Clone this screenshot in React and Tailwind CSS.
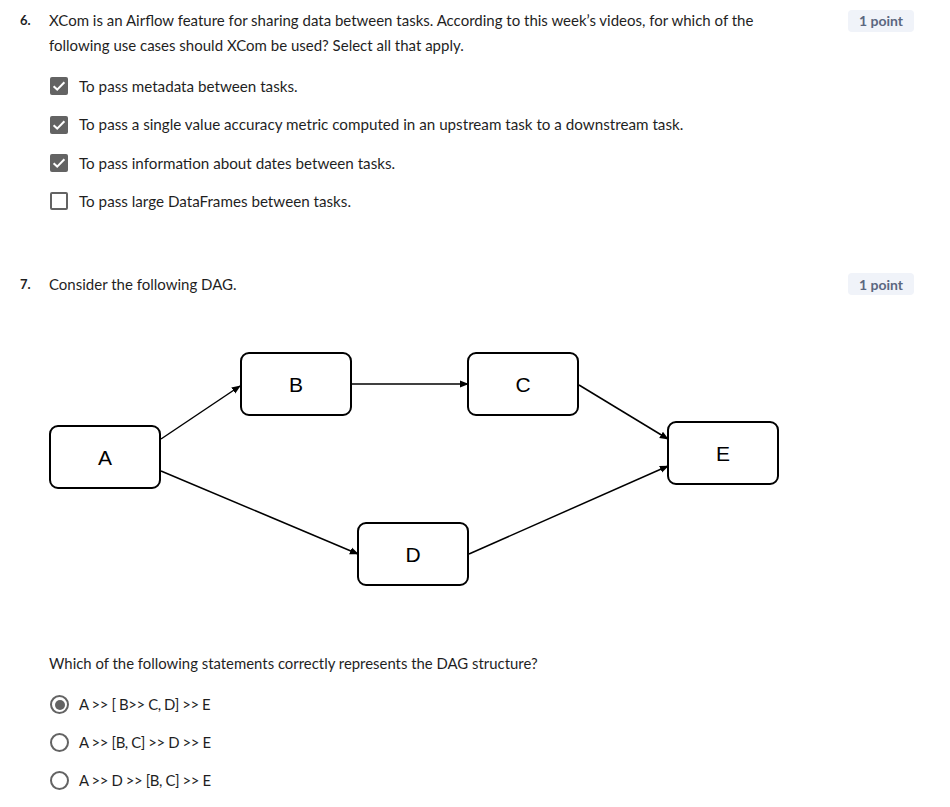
import React from "react";

const font = { fontFamily: "Lato, 'Noto Sans', sans-serif" };

function Badge() {
  return (
    <span className="shrink-0 rounded-[4px] bg-[#f0f3f9] px-[11px] h-[22px] flex items-center text-[14px] font-bold text-[#5b6780]">
      1 point
    </span>
  );
}

function Checkbox({ checked }) {
  return checked ? (
    <span className="w-[18px] h-[18px] rounded-[2px] bg-[#636363] flex items-center justify-center shrink-0">
      <svg width="16" height="16" viewBox="0 0 16 16">
        <path d="M2.6 8.2 L6.2 11.6 L13.4 4.2" fill="none" stroke="white" strokeWidth="2" />
      </svg>
    </span>
  ) : (
    <span className="w-[18px] h-[18px] rounded-[2px] border-2 border-[#636363] bg-white shrink-0" />
  );
}

function Radio({ checked }) {
  return (
    <span className="w-[19px] h-[19px] rounded-full border-2 border-[#636363] flex items-center justify-center shrink-0">
      {checked && <span className="w-[10px] h-[10px] rounded-full bg-[#636363]" />}
    </span>
  );
}

function Node({ x, y, label }) {
  return (
    <g>
      <rect x={x} y={y} width="110" height="62" rx="8" fill="white" stroke="black" strokeWidth="2" />
      <text
        x={x + 55}
        y={y + 39}
        textAnchor="middle"
        fontFamily="'Liberation Sans', Arial, sans-serif"
        fontSize="21"
        fill="black"
      >
        {label}
      </text>
    </g>
  );
}

function Edge({ x1, y1, x2, y2 }) {
  return <line x1={x1} y1={y1} x2={x2} y2={y2} stroke="black" strokeWidth="1.5" markerEnd="url(#arrow)" />;
}

function Dag() {
  return (
    <svg width="760" height="262" viewBox="40 340 760 262" className="block">
      <defs>
        <marker id="arrow" viewBox="0 0 10 10" refX="9" refY="5" markerWidth="6" markerHeight="6" orient="auto">
          <path d="M0 1 L10 5 L0 9 z" fill="black" />
        </marker>
      </defs>
      <Edge x1={161} y1={440} x2={240} y2={387} />
      <Edge x1={352} y1={385} x2={468} y2={385} />
      <Edge x1={579} y1={386} x2={668} y2={440} />
      <Edge x1={161} y1={472} x2={358} y2={555} />
      <Edge x1={469} y1={555} x2={668} y2={467} />
      <Node x={50} y={427} label="A" />
      <Node x={241} y={354} label="B" />
      <Node x={468} y={354} label="C" />
      <Node x={358} y={524} label="D" />
      <Node x={668} y={423} label="E" />
    </svg>
  );
}

export default function App() {
  const q6 = [
    { text: "To pass metadata between tasks.", checked: true },
    { text: "To pass a single value accuracy metric computed in an upstream task to a downstream task.", checked: true },
    { text: "To pass information about dates between tasks.", checked: true },
    { text: "To pass large DataFrames between tasks.", checked: false },
  ];
  const q7 = [
    { text: "A >> [ B>> C, D] >> E", checked: true },
    { text: "A >> [B, C] >> D >> E", checked: false },
    { text: "A >> D >> [B, C] >> E", checked: false },
  ];

  return (
    <div className="bg-white w-[950px] min-h-[807px] text-[#1f1f1f] pl-[20px] pr-[36px] pt-[8px]" style={font}>
      {/* Question 6 */}
      <div className="flex">
        <span className="w-[29px] shrink-0 text-[13px] font-bold leading-[25px]">6.</span>
        <div className="flex-1">
          <div className="flex justify-between gap-4">
            <p className="text-[15px] leading-[25px] max-w-[720px]">
              XCom is an Airflow feature for sharing data between tasks. According to this week’s videos, for which of the
              following use cases should XCom be used? Select all that apply.
            </p>
            <div className="h-[25px] flex items-center">
              <Badge />
            </div>
          </div>
          <div className="mt-[9px] flex flex-col">
            {q6.map((o) => (
              <div key={o.text} className="h-[38.4px] flex items-center gap-[11px] pl-[1px] text-[15.2px]">
                <Checkbox checked={o.checked} />
                <span>{o.text}</span>
              </div>
            ))}
          </div>
        </div>
      </div>

      {/* Question 7 */}
      <div className="flex mt-[51px]">
        <span className="w-[29px] shrink-0 text-[13px] font-bold leading-[25px]">7.</span>
        <div className="flex-1">
          <div className="flex justify-between gap-4">
            <p className="text-[15px] leading-[25px]">Consider the following DAG.</p>
            <div className="h-[25px] flex items-center">
              <Badge />
            </div>
          </div>
        </div>
      </div>

      <div className="mt-[42px] ml-[20px]">
        <Dag />
      </div>

      <div className="pl-[29px] mt-[50px]">
        <p className="text-[14.9px] leading-[25px]">Which of the following statements correctly represents the DAG structure?</p>
        <div className="mt-[10px] flex flex-col">
          {q7.map((o) => (
            <div key={o.text} className="h-[38px] flex items-center gap-[10px] pl-[1px] text-[14.9px] tracking-[-0.4px]">
              <Radio checked={o.checked} />
              <span>{o.text}</span>
            </div>
          ))}
        </div>
      </div>
    </div>
  );
}
